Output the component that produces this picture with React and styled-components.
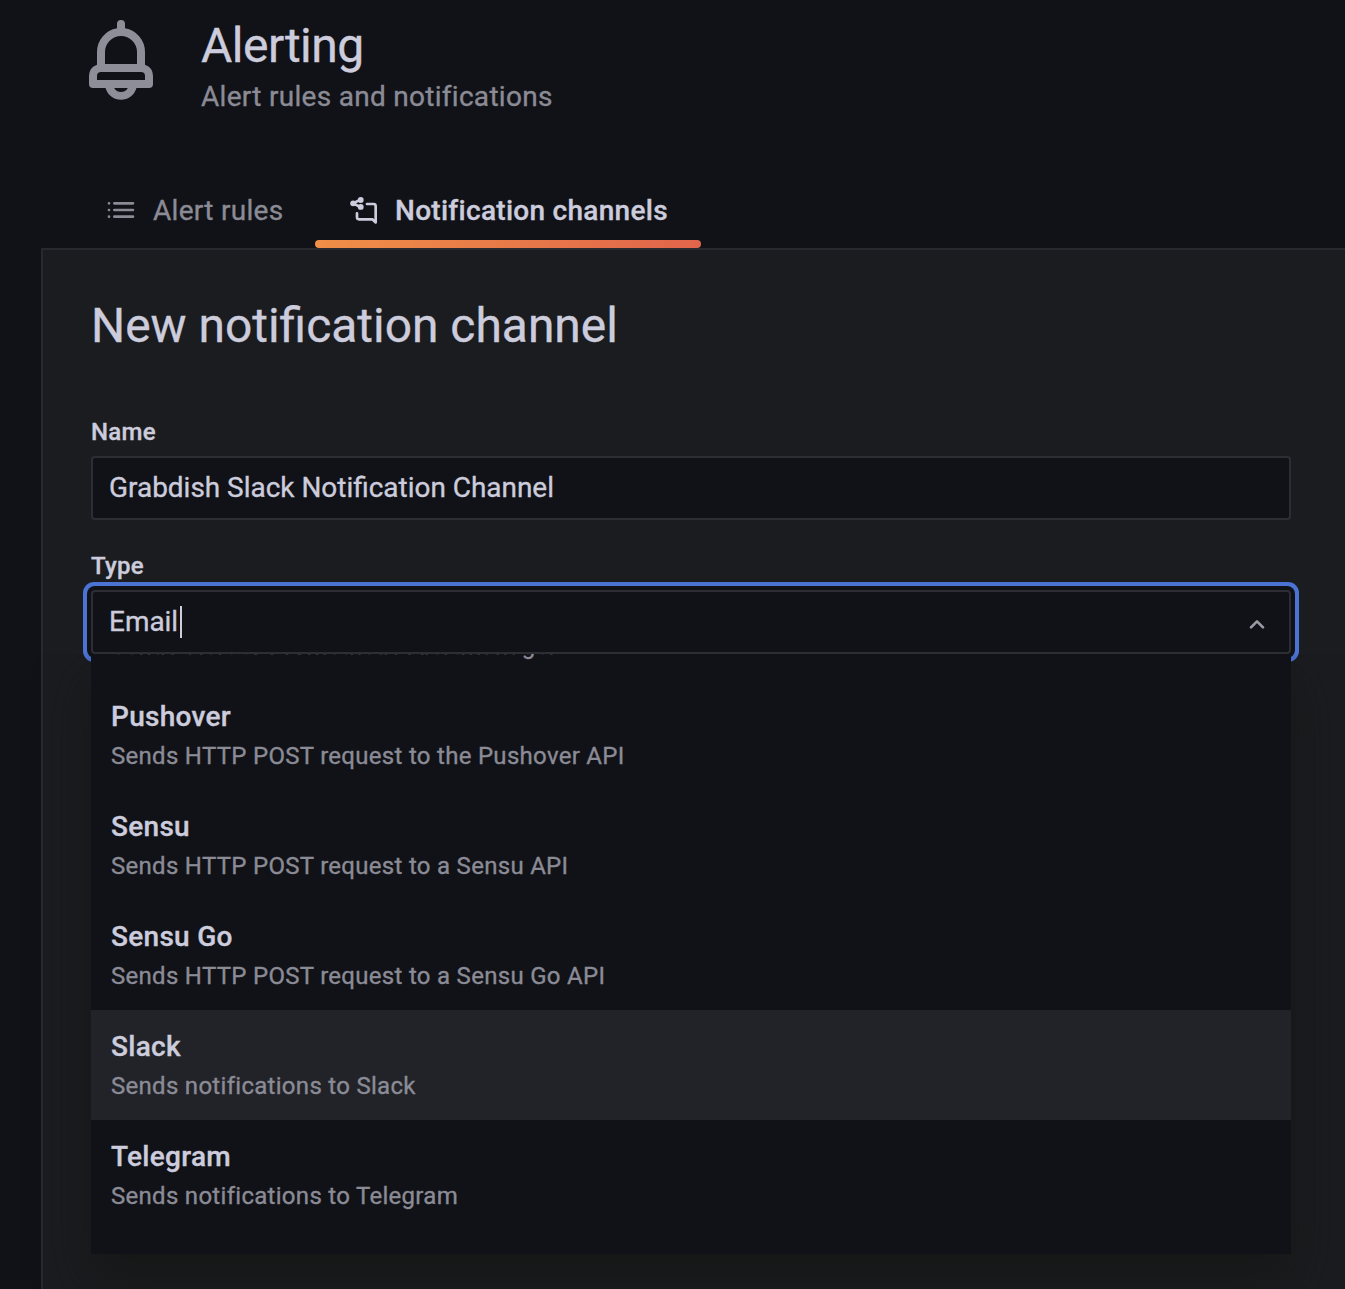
import React from 'react';
import styled, { createGlobalStyle } from 'styled-components';

const GlobalStyle = createGlobalStyle`
  * { box-sizing: border-box; }
  html, body { margin: 0; background: #111217; }
  body {
    height: 1289px;
    overflow: hidden;
    font-family: Roboto, "Liberation Sans", sans-serif;
    font-size: 28px;
    line-height: 44px;
    letter-spacing: 0.29px;
    color: #ccccdc;
    -webkit-text-stroke: 0.35px currentColor;
  }
`;

const Page = styled.div`
  height: 1289px;
  display: flex;
  flex-direction: column;
  overflow: hidden;
`;

const Header = styled.header`
  display: flex;
  flex: none;
  height: 172px;
  padding: 12px 0 0 73px;
`;

const HeaderIcon = styled.svg`
  width: 96px;
  height: 96px;
  margin-right: 32px;
  fill: #8e8e99;
`;

const Title = styled.h1`
  margin: 5px 0 0;
  font-size: 48px;
  line-height: 58px;
  font-weight: 400;
  letter-spacing: -0.5px;
`;

const Subtitle = styled.div`
  color: #8b8b96;
  line-height: 44px;
`;

const Tabs = styled.nav`
  display: flex;
  flex: none;
  height: 76px;
  padding-left: 73px;
`;

const Tab = styled.a`
  position: relative;
  display: flex;
  align-items: center;
  gap: 16px;
  height: 76px;
  width: ${(p) => p.$width}px;
  padding-left: 32px;
  color: ${(p) => (p.$active ? '#ccccdc' : '#8b8b96')};
  font-weight: ${(p) => (p.$active ? 500 : 400)};

  &::after {
    content: '';
    display: ${(p) => (p.$active ? 'block' : 'none')};
    position: absolute;
    left: 0;
    right: 0;
    bottom: 0;
    height: 8px;
    border-radius: 4px;
    background: linear-gradient(90deg, #f08f47, #e1654b);
  }
`;

const TabText = styled.span`
  padding-top: 2px;
`;

const TabIcon = styled.svg`
  width: 32px;
  height: 32px;
  flex: none;
`;

const Panel = styled.main`
  flex: 1;
  margin-left: 41px;
  padding: 48px 54px 0 48px;
  background: #1b1c20;
  border-top: 2px solid #28292e;
  border-left: 2px solid #28292e;
`;

const Heading = styled.h2`
  margin: 0 0 64px;
  font-size: 47.93px;
  line-height: 56px;
  font-weight: 400;
  letter-spacing: 0;
`;

const Field = styled.div`
  position: relative;
  margin-bottom: 32px;
`;

const Label = styled.label`
  display: block;
  height: 38px;
  font-size: 24px;
  line-height: 28px;
  font-weight: 500;
`;

const Control = styled.div`
  display: flex;
  align-items: center;
  height: 64px;
  padding: 0 16px;
  background: #111217;
  border: 2px solid #2d2e33;
  border-radius: 4px;
  font-size: 27.95px;
  letter-spacing: 0;
  box-shadow: ${(p) => (p.$focused ? '0 0 0 4px #111217, 0 0 0 8px #4a73d4' : 'none')};
`;

const Caret = styled.span`
  width: 2px;
  height: 32px;
  margin-left: 2px;
  background: #ccccdc;
`;

const Chevron = styled.svg`
  width: 32px;
  height: 32px;
  margin: 4px 0 0 auto;
`;

const Menu = styled.div`
  position: absolute;
  top: 100%;
  left: 0;
  right: 0;
  height: 600px;
  overflow: hidden;
  display: flex;
  flex-direction: column;
  justify-content: flex-end;
  padding-bottom: 24px;
  background: #111217;
`;

const MenuShadow = styled.div`
  position: absolute;
  top: 100%;
  left: 0;
  right: 0;
  height: 600px;
  box-shadow: 0 26px 48px rgba(20, 22, 18, 0.7);
  clip-path: inset(0 -70px -80px -70px);
`;

const Option = styled.div`
  flex: none;
  height: 110px;
  padding: 17px 20px 0;
  background: ${(p) => (p.$hovered ? '#222328' : 'transparent')};
`;

const OptionName = styled.div`
  height: 40px;
  line-height: 40px;
  font-weight: 500;
`;

const OptionText = styled.div`
  height: 38px;
  font-size: 24px;
  line-height: 38px;
  color: #8b8b96;
`;

const options = [
  ['Prometheus Alertmanager', 'Sends alert to Prometheus Alertmanager'],
  ['Pushover', 'Sends HTTP POST request to the Pushover API'],
  ['Sensu', 'Sends HTTP POST request to a Sensu API'],
  ['Sensu Go', 'Sends HTTP POST request to a Sensu Go API'],
  ['Slack', 'Sends notifications to Slack'],
  ['Telegram', 'Sends notifications to Telegram'],
];

export default function App() {
  return (
    <Page>
      <GlobalStyle />
      <Header>
        <HeaderIcon viewBox="0 0 24 24">
          <path d="M18,13.18V10a6,6,0,0,0-5-5.91V3a1,1,0,0,0-2,0V4.09A6,6,0,0,0,6,10v3.18A3,3,0,0,0,4,16v2a1,1,0,0,0,1,1H8.14a4,4,0,0,0,7.72,0H19a1,1,0,0,0,1-1V16A3,3,0,0,0,18,13.18ZM8,10a4,4,0,0,1,8,0v3H8Zm4,10a2,2,0,0,1-1.72-1h3.44A2,2,0,0,1,12,20Zm6-3H6V16a1,1,0,0,1,1-1H17a1,1,0,0,1,1,1Z" />
        </HeaderIcon>
        <div>
          <Title>Alerting</Title>
          <Subtitle>Alert rules and notifications</Subtitle>
        </div>
      </Header>
      <Tabs>
        <Tab $width={242}>
          <TabIcon viewBox="0 0 24 24" fill="none" stroke="currentColor" strokeWidth="2" strokeLinecap="round">
            <path d="M3 7h.01M3 12h.01M3 17h.01M7 7h14M7 12h14M7 17h14" />
          </TabIcon>
          <TabText>Alert rules</TabText>
        </Tab>
        <Tab $active $width={386}>
          <TabIcon viewBox="0 0 24 24" fill="none" stroke="currentColor" strokeWidth="2" strokeLinecap="round" strokeLinejoin="round">
            <path d="M15 7.500H20a1.500 1.500 0 0 1 1.500 1.500v12.300L19 19H9a1.500 1.500 0 0 1-1.500-1.500v-3M4.500 7l5.500-2.700M4.500 7l5.500 2.700" />
            <g fill="currentColor" stroke="none">
              <circle cx="4.600" cy="7" r="2.200" />
              <circle cx="10.300" cy="4.500" r="2.200" />
              <circle cx="10.300" cy="9.700" r="2.200" />
            </g>
          </TabIcon>
          <TabText>Notification channels</TabText>
        </Tab>
      </Tabs>
      <Panel>
        <Heading>New notification channel</Heading>
        <Field>
          <Label>Name</Label>
          <Control>Grabdish Slack Notification Channel</Control>
        </Field>
        <Field>
          <Label>Type</Label>
          <MenuShadow />
          <Control $focused>
            Email
            <Caret />
            <Chevron viewBox="0 0 24 24" fill="none" stroke="#9a9aa5" strokeWidth="2" strokeLinecap="round" strokeLinejoin="round">
              <path d="M7.500 14.500L12 10l4.500 4.500" />
            </Chevron>
          </Control>
          <Menu>
            {options.map(([name, text]) => (
              <Option key={name} $hovered={name === 'Slack'}>
                <OptionName>{name}</OptionName>
                <OptionText>{text}</OptionText>
              </Option>
            ))}
          </Menu>
        </Field>
      </Panel>
    </Page>
  );
}
